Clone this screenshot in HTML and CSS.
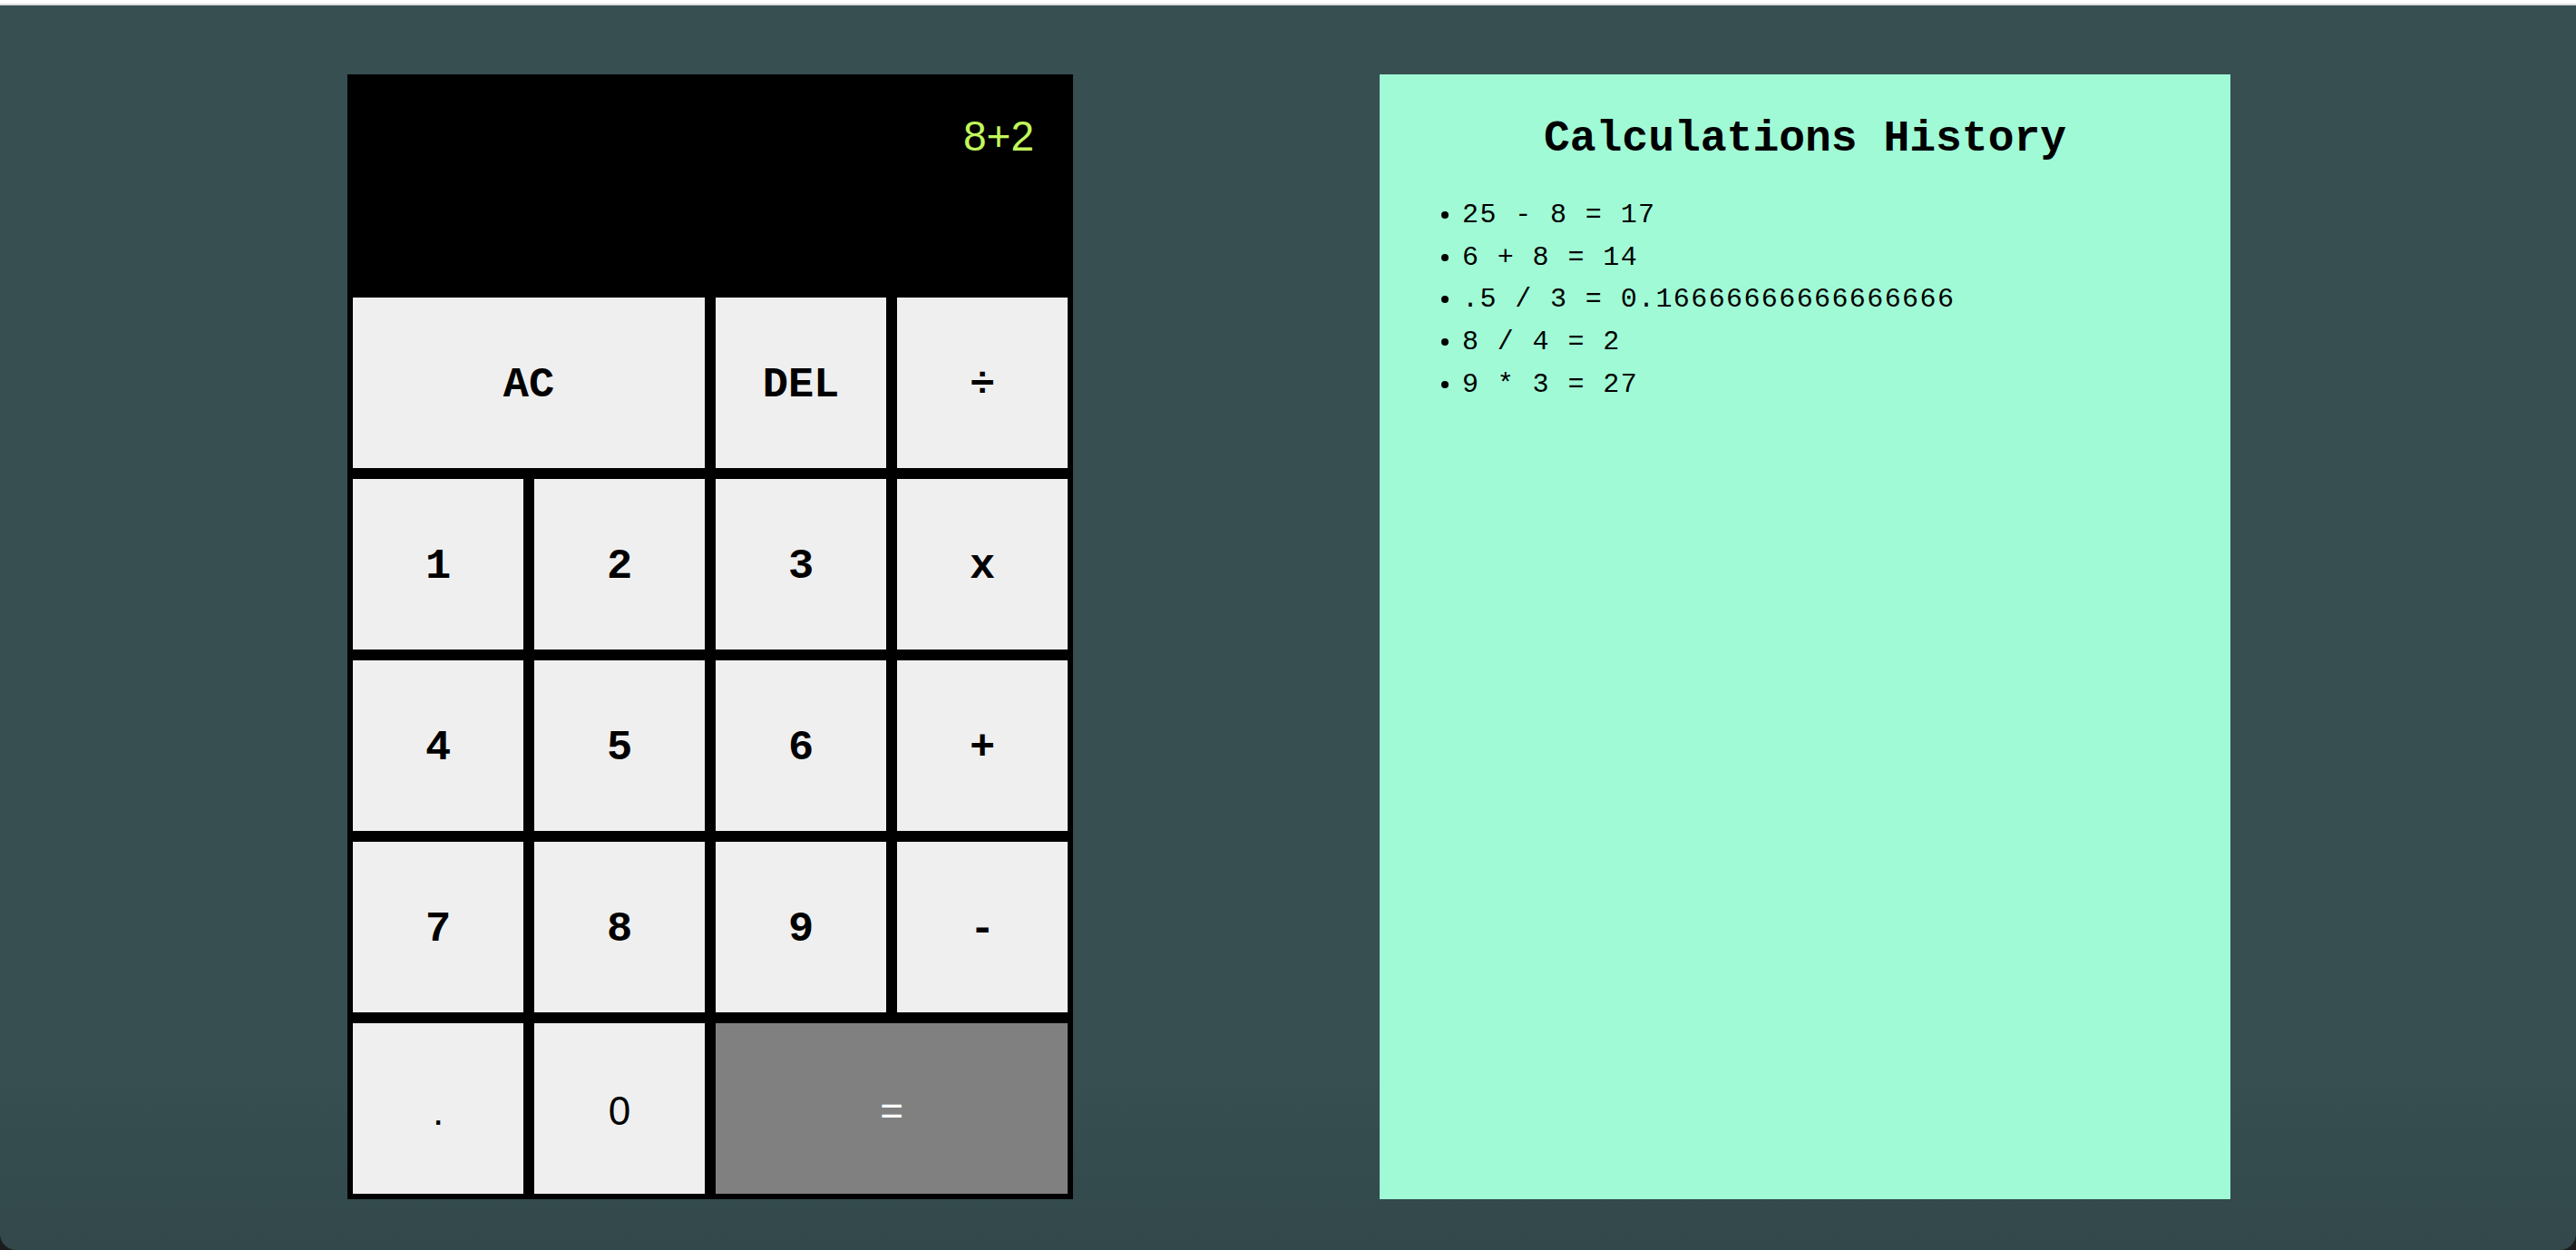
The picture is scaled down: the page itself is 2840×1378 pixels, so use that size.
FILE: index.html
```html
<!DOCTYPE html>
<html lang="en">
<head>
<meta charset="utf-8">
<title>Calculator</title>
<link rel="stylesheet" href="styles.css">
</head>
<body>
<div class="topbar"></div>
<main class="app">
  <div class="calculator">
    <div class="display">8+2</div>
    <button class="key span-two">AC</button>
    <button class="key">DEL</button>
    <button class="key">÷</button>
    <button class="key">1</button>
    <button class="key">2</button>
    <button class="key">3</button>
    <button class="key">x</button>
    <button class="key">4</button>
    <button class="key">5</button>
    <button class="key">6</button>
    <button class="key">+</button>
    <button class="key">7</button>
    <button class="key">8</button>
    <button class="key">9</button>
    <button class="key">-</button>
    <button class="key plain">.</button>
    <button class="key plain">0</button>
    <button class="key plain equals span-two">=</button>
  </div>
  <section class="history">
    <h1 class="history-title">Calculations History</h1>
    <ul class="history-list">
      <li>25 - 8 = 17</li>
      <li>6 + 8 = 14</li>
      <li>.5 / 3 = 0.16666666666666666</li>
      <li>8 / 4 = 2</li>
      <li>9 * 3 = 27</li>
    </ul>
  </section>
</main>
</body>
</html>
```

FILE: styles.css
```css
* {
  box-sizing: border-box;
}

html, body {
  margin: 0;
  padding: 0;
}

body {
  background: #1c1c1c;
  width: 2840px;
  height: 1378px;
  overflow: hidden;
}

.topbar {
  height: 6px;
  background: #ffffff;
  border-bottom: 2px solid #dcdcdc;
}

.app {
  height: 1372px;
  background: linear-gradient(to bottom, #374f51 0, #374f51 1180px, #32484a 1372px);
  border-radius: 0 0 18px 18px;
  display: flex;
  align-items: flex-start;
  padding: 76px 0 0 383px;
  gap: 338px;
}

.calculator {
  display: grid;
  grid-template-columns: repeat(4, 200px);
  grid-template-rows: 240px repeat(5, 200px);
  background: #000000;
  width: 800px;
}

.display {
  grid-column: 1 / -1;
  padding: 41px 43px 0 0;
  text-align: right;
  color: #c2f75c;
  font-family: "Liberation Sans", Arial, sans-serif;
  font-size: 46px;
}

.key {
  margin: 6px;
  border: none;
  padding: 5px 0 0 0;
  background: #efefef;
  color: #000000;
  font-family: "Liberation Mono", "Courier New", monospace;
  font-weight: bold;
  font-size: 47px;
  cursor: pointer;
}

.key.plain {
  font-family: "Liberation Sans", Arial, sans-serif;
  font-weight: normal;
  font-size: 44px;
}

.key.equals {
  background: #808080;
  color: #ffffff;
}

.span-two {
  grid-column: span 2;
}

.history {
  width: 938px;
  height: 1240px;
  background: #a0fad6;
  padding: 44px 0 0 0;
}

.history-title {
  margin: 0;
  text-align: center;
  font-family: "Liberation Mono", "Courier New", monospace;
  font-weight: bold;
  font-size: 48px;
  line-height: 54px;
  color: #000000;
}

.history-list {
  margin: 34px 0 0 0;
  padding: 0 0 0 91px;
  font-family: "Liberation Mono", "Courier New", monospace;
  font-size: 30px;
  letter-spacing: 1.4px;
  line-height: 46.7px;
  color: #000000;
}
```
